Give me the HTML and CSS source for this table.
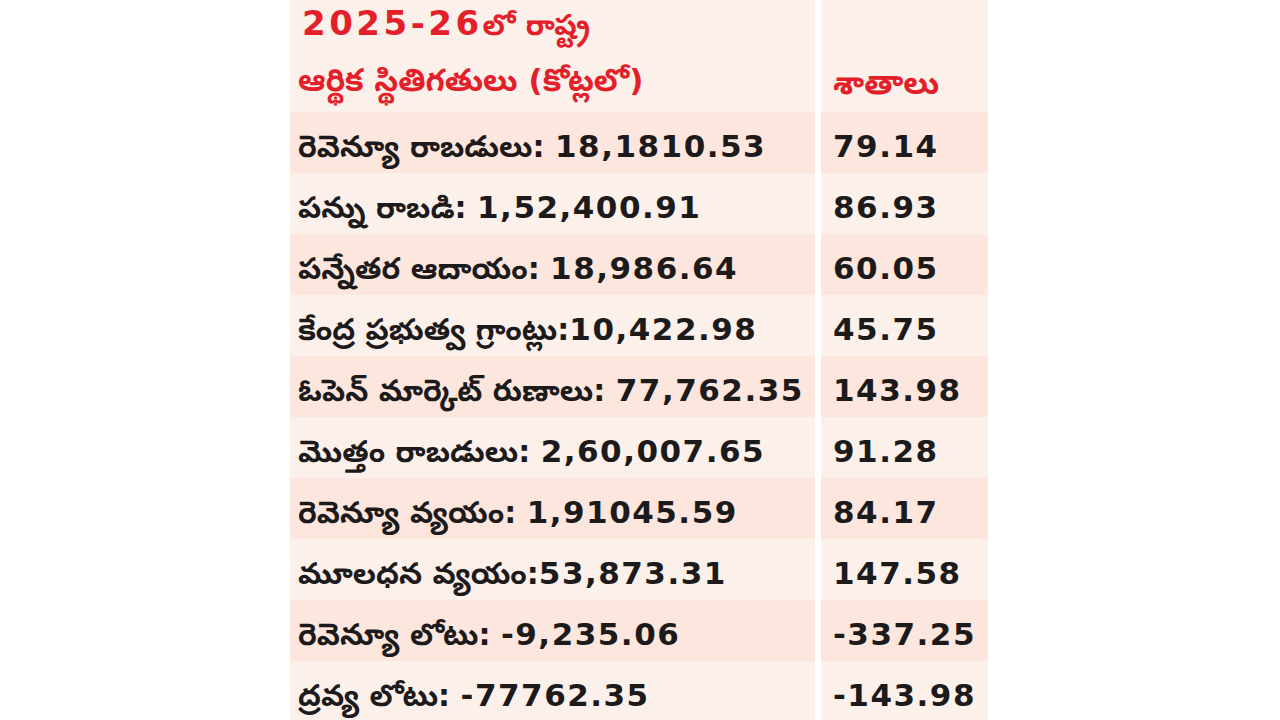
FILE: index.html
```html
<!DOCTYPE html>
<html lang="te">
<head>
<meta charset="utf-8">
<title>2025-26లో రాష్ట్ర ఆర్థిక స్థితిగతులు</title>
<link rel="stylesheet" href="styles.css">
</head>
<body>
<div class="table">
  <div class="cell light title"><span class="tnum">2025-26</span><span class="tte">లో రాష్ట్ర</span></div>
  <div class="cell light"></div>
  <div class="cell light head"><span class="te">ఆర్థిక స్థితిగతులు (కోట్లలో)</span></div>
  <div class="cell light head right"><span class="te">శాతాలు</span></div>

  <div class="cell pink"><span class="te">రెవెన్యూ రాబడులు:</span> <span class="num">18,1810.53</span></div>
  <div class="cell pink right"><span class="num">79.14</span></div>
  <div class="cell light"><span class="te">పన్ను రాబడి:</span> <span class="num">1,52,400.91</span></div>
  <div class="cell light right"><span class="num">86.93</span></div>
  <div class="cell pink"><span class="te">పన్నేతర ఆదాయం:</span> <span class="num">18,986.64</span></div>
  <div class="cell pink right"><span class="num">60.05</span></div>
  <div class="cell light"><span class="te">కేంద్ర ప్రభుత్వ గ్రాంట్లు:</span><span class="num">10,422.98</span></div>
  <div class="cell light right"><span class="num">45.75</span></div>
  <div class="cell pink"><span class="te">ఓపెన్ మార్కెట్ రుణాలు:</span> <span class="num">77,762.35</span></div>
  <div class="cell pink right"><span class="num">143.98</span></div>
  <div class="cell light"><span class="te">మొత్తం రాబడులు:</span> <span class="num">2,60,007.65</span></div>
  <div class="cell light right"><span class="num">91.28</span></div>
  <div class="cell pink"><span class="te">రెవెన్యూ వ్యయం:</span> <span class="num">1,91045.59</span></div>
  <div class="cell pink right"><span class="num">84.17</span></div>
  <div class="cell light"><span class="te">మూలధన వ్యయం:</span><span class="num">53,873.31</span></div>
  <div class="cell light right"><span class="num">147.58</span></div>
  <div class="cell pink"><span class="te">రెవెన్యూ లోటు:</span> <span class="num">-9,235.06</span></div>
  <div class="cell pink right"><span class="num">-337.25</span></div>
  <div class="cell light"><span class="te">ద్రవ్య లోటు:</span> <span class="num">-77762.35</span></div>
  <div class="cell light right"><span class="num">-143.98</span></div>
</div>
</body>
</html>
```

FILE: styles.css
```css
html, body {
  margin: 0;
  padding: 0;
  background: #ffffff;
}
body {
  width: 1280px;
  height: 720px;
  overflow: hidden;
  font-family: "DejaVu Sans", "Noto Sans Telugu", "Noto Sans", sans-serif;
  font-weight: bold;
  color: #1c1a1a;
}
.table {
  margin-left: 290px;
  display: grid;
  grid-template-columns: 525px 167px;
  grid-template-rows: 52px 60px repeat(10, 61px);
  column-gap: 6px;
}
.cell {
  display: block;
  box-sizing: border-box;
  padding-left: 8px;
  padding-top: 8px;
  font-size: 30px;
  line-height: 53px;
  white-space: nowrap;
  overflow: hidden;
}
.cell.right {
  padding-left: 12px;
}
.light {
  background: #fbf0ea;
}
.pink {
  background: #fde6dd;
}
.te {
  font-size: 30px;
}
.num {
  font-size: 31px;
  letter-spacing: 1.5px;
}
.title {
  color: #e3202a;
  padding-left: 12px;
  padding-top: 0;
  line-height: 46px;
}
.tnum {
  font-size: 34px;
  letter-spacing: 3.5px;
}
.tte {
  font-size: 29px;
}
.head {
  color: #e3202a;
  padding-top: 0;
  line-height: 56px;
}
.head .te {
  font-size: 31px;
}
.head.right .te {
  font-size: 32px;
}
.head.right {
  line-height: 62px;
}
```
